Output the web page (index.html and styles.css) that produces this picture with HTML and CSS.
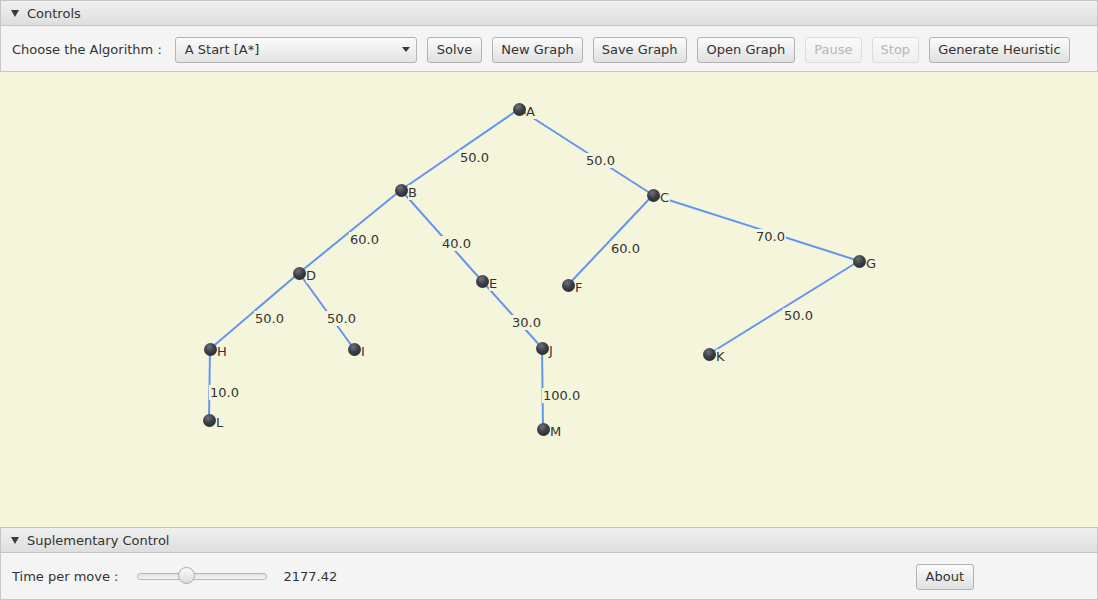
FILE: index.html
```html
<!DOCTYPE html>
<html>
<head>
<meta charset="utf-8">
<link rel="stylesheet" href="styles.css">
</head>
<body>
<div class="app">
  <div class="titled">
    <div class="title"><span class="arrow"></span><span>Controls</span></div>
    <div class="content toolbar">
      <span class="lbl algo-lbl">Choose the Algorithm :</span>
      <div class="combo"><span>A Start [A*]</span><span class="combo-arrow"></span></div>
      <button class="btn wide">Solve</button>
      <button class="btn">New Graph</button>
      <button class="btn">Save Graph</button>
      <button class="btn wide">Open Graph</button>
      <button class="btn disabled">Pause</button>
      <button class="btn disabled">Stop</button>
      <button class="btn">Generate Heuristic</button>
    </div>
  </div>

  <div class="canvas">
    <svg class="edges" width="1098" height="455">
      <g stroke="#6495ED" stroke-width="2">
        <line x1="519" y1="37" x2="401" y2="118"/>
        <line x1="519" y1="37" x2="653" y2="123"/>
        <line x1="401" y1="118" x2="299" y2="201"/>
        <line x1="401" y1="118" x2="482" y2="209"/>
        <line x1="653" y1="123" x2="568" y2="213"/>
        <line x1="653" y1="123" x2="859" y2="189"/>
        <line x1="299" y1="201" x2="210" y2="277"/>
        <line x1="299" y1="201" x2="354" y2="277"/>
        <line x1="482" y1="209" x2="542" y2="276"/>
        <line x1="210" y1="277" x2="209" y2="348"/>
        <line x1="542" y1="276" x2="543" y2="357"/>
        <line x1="859" y1="189" x2="709" y2="282"/>
      </g>
    </svg>

    <span class="weight" style="left:459px;top:78px">50.0</span>
    <span class="weight" style="left:585px;top:81px">50.0</span>
    <span class="weight" style="left:349px;top:160px">60.0</span>
    <span class="weight" style="left:441px;top:164px">40.0</span>
    <span class="weight" style="left:610px;top:169px">60.0</span>
    <span class="weight" style="left:755px;top:157px">70.0</span>
    <span class="weight" style="left:254px;top:239px">50.0</span>
    <span class="weight" style="left:326px;top:239px">50.0</span>
    <span class="weight" style="left:511px;top:243px">30.0</span>
    <span class="weight" style="left:209px;top:313px">10.0</span>
    <span class="weight" style="left:542px;top:316px">100.0</span>
    <span class="weight" style="left:783px;top:236px">50.0</span>

    <div class="node" style="left:519px;top:37px"><span class="dot"></span><span class="name">A</span></div>
    <div class="node" style="left:401px;top:118px"><span class="dot"></span><span class="name">B</span></div>
    <div class="node" style="left:653px;top:123px"><span class="dot"></span><span class="name">C</span></div>
    <div class="node" style="left:299px;top:201px"><span class="dot"></span><span class="name">D</span></div>
    <div class="node" style="left:482px;top:209px"><span class="dot"></span><span class="name">E</span></div>
    <div class="node" style="left:568px;top:213px"><span class="dot"></span><span class="name">F</span></div>
    <div class="node" style="left:859px;top:189px"><span class="dot"></span><span class="name">G</span></div>
    <div class="node" style="left:210px;top:277px"><span class="dot"></span><span class="name">H</span></div>
    <div class="node" style="left:354px;top:277px"><span class="dot"></span><span class="name">I</span></div>
    <div class="node" style="left:542px;top:276px"><span class="dot"></span><span class="name">J</span></div>
    <div class="node" style="left:709px;top:282px"><span class="dot"></span><span class="name">K</span></div>
    <div class="node" style="left:209px;top:348px"><span class="dot"></span><span class="name">L</span></div>
    <div class="node" style="left:543px;top:357px"><span class="dot"></span><span class="name">M</span></div>
  </div>

  <div class="titled">
    <div class="title"><span class="arrow"></span><span>Suplementary Control</span></div>
    <div class="content bottombar">
      <span class="lbl time-lbl">Time per move :</span>
      <div class="slider"><span class="track"></span><span class="thumb"></span></div>
      <span class="lbl value">2177.42</span>
      <button class="btn about">About</button>
    </div>
  </div>
</div>
</body>
</html>
```

FILE: styles.css
```css
* { box-sizing: border-box; }
html, body {
  margin: 0;
  padding: 0;
  width: 1098px;
  height: 600px;
  overflow: hidden;
  font-family: "DejaVu Sans", "Liberation Sans", sans-serif;
  font-size: 13px;
  color: #333;
  background: #f4f4f4;
}
.app {
  display: flex;
  flex-direction: column;
  height: 600px;
}
.title {
  height: 26px;
  display: flex;
  align-items: center;
  padding-left: 10px;
  background: linear-gradient(to bottom, #f0f0f0, #dedede);
  border: 1px solid #c4c4c4;
  color: #333;
}
.arrow {
  width: 0;
  height: 0;
  border-left: 4.5px solid transparent;
  border-right: 4.5px solid transparent;
  border-top: 7px solid #3a3a3a;
  margin-right: 8px;
  margin-top: 1px;
}
.content {
  background: #f4f4f4;
  border: 1px solid #c8c8c8;
  border-top: none;
  display: flex;
  align-items: center;
}
.toolbar {
  height: 46px;
  padding-left: 11px;
  padding-top: 2px;
  gap: 10px;
}
.algo-lbl { margin-right: 3px; }
.combo {
  width: 242px;
  height: 26px;
  border: 1px solid #b3b3b3;
  border-radius: 3px;
  background: linear-gradient(to bottom, #fbfbfb, #e3e3e3);
  display: flex;
  align-items: center;
  justify-content: space-between;
  padding: 0 6px 0 9px;
  color: #333;
}
.combo-arrow {
  width: 0;
  height: 0;
  border-left: 4px solid transparent;
  border-right: 4px solid transparent;
  border-top: 5px solid #3a3a3a;
}
.btn {
  height: 26px;
  padding: 0 8px;
  font-family: inherit;
  font-size: 13px;
  color: #333;
  border: 1px solid #b3b3b3;
  border-radius: 3px;
  background: linear-gradient(to bottom, #fbfbfb, #e0e0e0);
  line-height: 24px;
}
.btn.wide { padding: 0 9px; }
.btn.disabled {
  color: #b6b6b6;
  border-color: #dcdcdc;
  background: linear-gradient(to bottom, #f9f9f9, #efefef);
}
.canvas {
  position: relative;
  height: 455px;
  background: #f5f5dc;
  overflow: hidden;
}
.edges {
  position: absolute;
  left: 0;
  top: 0;
}
.weight {
  position: absolute;
  line-height: 15px;
  padding: 0 1px;
  background: #f5f5dc;
  color: #333;
  white-space: nowrap;
}
.node {
  position: absolute;
  width: 0;
  height: 0;
}
.dot {
  position: absolute;
  left: -6.5px;
  top: -6.5px;
  width: 13px;
  height: 13px;
  border-radius: 50%;
  background: radial-gradient(circle at 40% 30%, #6d7278 0%, #3a3e44 45%, #202226 100%);
  z-index: 2;
}
.name {
  position: absolute;
  left: 7px;
  top: -5px;
  line-height: 15px;
  padding-right: 1px;
  background: #f5f5dc;
  color: #333;
  z-index: 1;
}
.bottombar {
  height: 47px;
  padding-left: 11px;
}
.slider {
  position: relative;
  width: 130px;
  height: 18px;
  margin-left: 18px;
  display: flex;
  align-items: center;
}
.track {
  width: 130px;
  height: 7px;
  border-radius: 4px;
  border: 1px solid #b5b5b5;
  background: linear-gradient(to bottom, #e2e2e2, #f4f4f4);
}
.thumb {
  position: absolute;
  left: 41px;
  top: 0;
  width: 17px;
  height: 17px;
  border-radius: 50%;
  border: 1px solid #a9a9a9;
  background: linear-gradient(to bottom, #fafafa, #dcdcdc);
}
.value { margin-left: 17px; }
.about {
  margin-left: auto;
  margin-right: 123px;
  margin-top: 2px;
  padding: 0 9px;
}
```
